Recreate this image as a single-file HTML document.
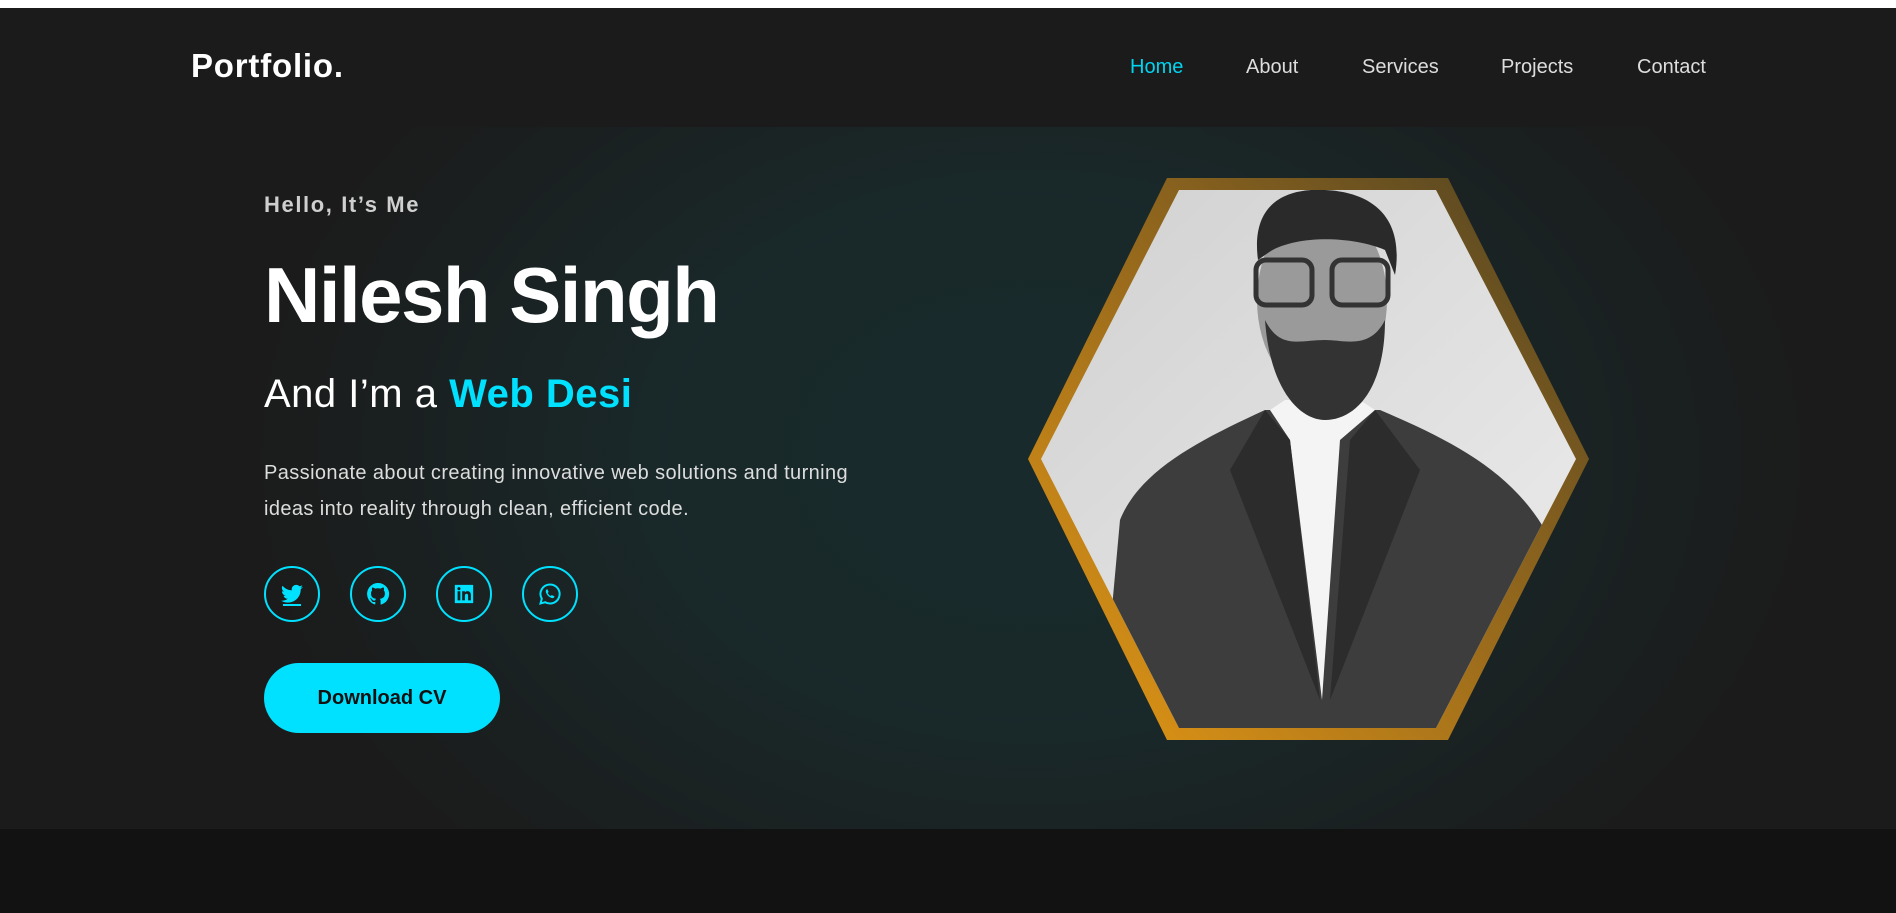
<!DOCTYPE html>
<html><head><meta charset="utf-8"><style>
*{margin:0;padding:0;box-sizing:border-box}
body{width:1896px;height:913px;overflow:hidden;background:#121212;font-family:"Liberation Sans",sans-serif;position:relative}
.top{position:absolute;left:0;top:0;width:1896px;height:8px;background:#fff}
.nav{position:absolute;left:0;top:8px;width:1896px;height:119px;background:#1b1b1b}
.logo{position:absolute;left:191px;top:47px;font-size:33px;font-weight:bold;color:#fff;letter-spacing:0.8px}
a{position:absolute;top:56px;font-size:20px;color:#ddd;text-decoration:none}
.hero{position:absolute;left:0;top:127px;width:1896px;height:702px;background:radial-gradient(ellipse 780px 560px at 1030px 330px,#182a2c 0%,#19292a 45%,#1b1b1b 100%)}
.t{position:absolute;left:264px;color:#fff}
.icon{position:absolute;top:566px;width:56px;height:56px;border:2px solid #00e1ff;border-radius:50%;display:flex;align-items:center;justify-content:center}
.btn{position:absolute;left:264px;top:663px;width:236px;height:70px;border-radius:35px;background:#00e1ff;color:#111;font-size:20px;font-weight:bold;display:flex;align-items:center;justify-content:center}
</style></head><body>
<div class="top"></div>
<div class="nav"></div>
<div class="logo">Portfolio.</div>
<a style="left:1130px;color:#00d4f0">Home</a>
<a style="left:1246px">About</a>
<a style="left:1362px">Services</a>
<a style="left:1501px">Projects</a>
<a style="left:1637px">Contact</a>
<div class="hero"></div>
<div class="t" style="top:192px;font-size:22px;font-weight:bold;color:#cfcfcf;letter-spacing:1.6px">Hello, It’s Me</div>
<div class="t" style="top:250px;font-size:78px;font-weight:bold;letter-spacing:-1.5px">Nilesh Singh</div>
<div class="t" style="top:372px;font-size:40px;letter-spacing:0.5px">And I’m a <span style="color:#00e1ff;font-weight:bold">Web Desi</span></div>
<div class="t" style="top:455px;font-size:20px;line-height:36px;color:#ddd;white-space:nowrap;letter-spacing:0.4px">Passionate about creating innovative web solutions and turning<br>ideas into reality through clean, efficient code.</div>
<div class="icon" style="left:264px"><svg width="24" height="24" viewBox="0 0 24 24"><path fill="#00e1ff" d="M23 5a9 9 0 0 1-2.6.7 4.5 4.5 0 0 0 2-2.5 9 9 0 0 1-2.9 1.1 4.5 4.5 0 0 0-7.7 4.1A12.8 12.8 0 0 1 2.5 3.7a4.5 4.5 0 0 0 1.4 6 4.5 4.5 0 0 1-2-.6 4.5 4.5 0 0 0 3.6 4.5 4.5 4.5 0 0 1-2 .1 4.5 4.5 0 0 0 4.2 3.1A9 9 0 0 1 1 18.6 12.8 12.8 0 0 0 7.9 20.6c8.3 0 12.8-6.9 12.8-12.8v-.6A9 9 0 0 0 23 5z"/><rect x="3" y="22" width="18" height="2" fill="#00e1ff"/></svg></div>
<div class="icon" style="left:350px"><svg width="24" height="24" viewBox="0 0 24 24"><path fill="#00e1ff" d="M12 1a11 11 0 0 0-3.5 21.4c.6.1.8-.2.8-.5v-2c-3.1.7-3.7-1.3-3.7-1.3-.5-1.3-1.2-1.6-1.2-1.6-1-.7.1-.7.1-.7 1.1.1 1.7 1.1 1.7 1.1 1 1.7 2.6 1.2 3.2.9.1-.7.4-1.2.7-1.5-2.5-.3-5.1-1.2-5.1-5.4 0-1.2.4-2.2 1.1-3-.1-.3-.5-1.4.1-2.9 0 0 .9-.3 3 1.1a10.5 10.5 0 0 1 5.5 0c2.1-1.4 3-1.1 3-1.1.6 1.5.2 2.6.1 2.9.7.8 1.1 1.8 1.1 3 0 4.2-2.6 5.1-5.1 5.4.4.4.8 1.1.8 2.1v3.1c0 .3.2.6.8.5A11 11 0 0 0 12 1z"/></svg></div>
<div class="icon" style="left:436px"><svg width="22" height="22" viewBox="0 0 24 24"><path fill="#00e1ff" d="M2 2h20v20H2z M5 9v10h3V9z M6.5 4.5a1.7 1.7 0 1 0 0 3.4 1.7 1.7 0 0 0 0-3.4z M10 9v10h3v-5c0-1.5.7-2.3 1.8-2.3s1.7.8 1.7 2.3v5h3v-6c0-2.6-1.5-4.2-3.6-4.2-1.4 0-2.4.7-2.9 1.4V9z" fill-rule="evenodd"/></svg></div>
<div class="icon" style="left:522px"><svg width="24" height="24" viewBox="0 0 24 24"><path fill="none" stroke="#00e1ff" stroke-width="2" d="M12 2.5a9.5 9.5 0 0 0-8.2 14.3L2.5 21.5l4.8-1.3A9.5 9.5 0 1 0 12 2.5z"/><path fill="#00e1ff" d="M8.5 7.5c.4-.3.9-.3 1.1.1l.9 2c.1.3 0 .6-.2.8l-.6.6c.6 1.3 1.7 2.4 3 3l.6-.6c.2-.2.5-.3.8-.2l2 .9c.4.2.4.7.1 1.1-.7.9-1.8 1.2-3 .7-2.4-1-4.2-2.8-5.2-5.2-.5-1.2-.2-2.3.5-3.2z"/></svg></div>
<div class="btn">Download CV</div>
<svg style="position:absolute;left:0;top:0" width="1896" height="913">
<defs>
<linearGradient id="g" x1="0" y1="1" x2="1" y2="0"><stop offset="0" stop-color="#e89a14"/><stop offset="0.5" stop-color="#9a6b1c"/><stop offset="1" stop-color="#4e4223"/></linearGradient>
<clipPath id="c"><polygon points="1179,190 1436,190 1576,459 1436,728 1179,728 1041,459"/></clipPath>
<linearGradient id="bg" x1="0" y1="0" x2="1" y2="1"><stop offset="0" stop-color="#d0d0d0"/><stop offset="1" stop-color="#eeeeee"/></linearGradient>
</defs>
<polygon points="1167,178 1448,178 1589,459 1448,740 1167,740 1028,459" fill="url(#g)"/>
<g clip-path="url(#c)">
<rect x="1020" y="180" width="580" height="560" fill="url(#bg)"/>
<path d="M1120 520 C1140 470 1200 440 1265 410 L1380 410 C1450 440 1510 470 1545 530 L1560 740 L1100 740 Z" fill="#3d3d3d"/>
<path d="M1270 410 L1290 440 L1322 700 L1340 440 L1375 410 L1360 400 L1285 400 Z" fill="#f4f4f4"/>
<path d="M1265 410 L1230 470 L1320 700 L1290 440 Z" fill="#2c2c2c"/>
<path d="M1375 410 L1420 470 L1330 700 L1350 440 Z" fill="#2c2c2c"/>
<ellipse cx="1322" cy="300" rx="65" ry="95" fill="#9a9a9a"/>
<path d="M1258 260 C1250 200 1290 188 1325 190 C1370 192 1405 215 1395 275 L1385 250 C1350 235 1290 235 1265 255 Z" fill="#2a2a2a"/>
<path d="M1265 320 C1270 390 1300 420 1325 420 C1355 420 1385 390 1385 320 C1370 350 1345 340 1325 340 C1300 340 1280 350 1265 320 Z" fill="#333"/>
<rect x="1256" y="260" width="56" height="45" rx="10" fill="none" stroke="#333" stroke-width="5"/>
<rect x="1332" y="260" width="56" height="45" rx="10" fill="none" stroke="#333" stroke-width="5"/>
</g>
</svg>
</body></html>
